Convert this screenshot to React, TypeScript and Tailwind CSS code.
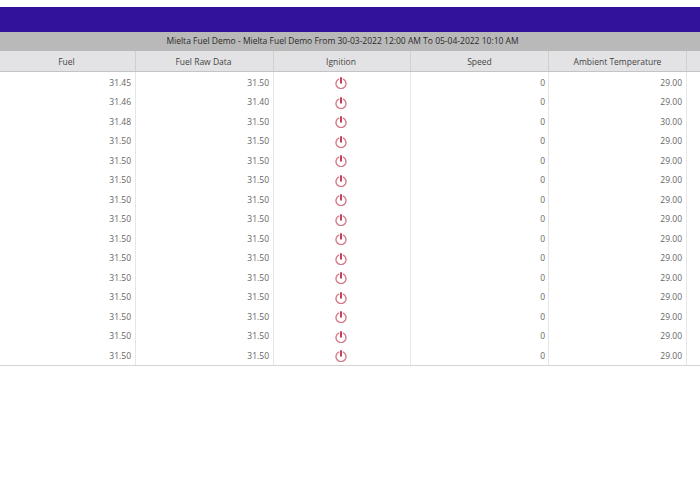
const columns = ["Fuel", "Fuel Raw Data", "Ignition", "Speed", "Ambient Temperature", ""];

const rows = [
  ["31.45", "31.50", "29.00"],
  ["31.46", "31.40", "29.00"],
  ["31.48", "31.50", "30.00"],
  ...Array.from({ length: 12 }, () => ["31.50", "31.50", "29.00"]),
];

const gridCols = "grid grid-cols-[136px_138px_137px_138px_138px_13px]";

function PowerIcon() {
  return (
    <svg width="12" height="13" viewBox="0 0 12 13" fill="none" stroke="#d57a8a" strokeWidth="1.4" strokeLinecap="round">
      <path d="M3.6 3.2a5 5 0 1 0 4.8 0" />
      <path d="M6 2v4.8" stroke="#c4415c" strokeWidth="2" />
    </svg>
  );
}

export default function App() {
  return (
    <div className="h-[500px] w-[700px] overflow-hidden bg-white pt-[7px] font-['Open_Sans',sans-serif] text-[8.5px] text-[#666]">
      <div className="h-[25px] bg-[#32129a]"></div>
      <div className="flex h-[19px] items-center justify-center bg-[#b9b9b9] pr-[15px] text-[#2a2a2a]">
        Mielta Fuel Demo - Mielta Fuel Demo From 30-03-2022 12:00 AM To 05-04-2022 10:10 AM
      </div>

      {/* header row */}
      <div className={`${gridCols} h-[21px] border-b border-[#c4c4c4] bg-[#e3e3e5] text-[#444]`}>
        {columns.map((name, i) => (
          <div
            key={i}
            className={`flex items-center justify-center border-r border-[#cfcfcf] pt-[2px] last:border-r-0 ${i < 3 ? "pr-[2px]" : ""}`}
          >
            {name}
          </div>
        ))}
      </div>

      {/* data rows */}
      <div className="border-b border-[#d4d4d4]">
        {rows.map((row, i) => (
          <div key={i} className={`${gridCols} h-[19.5px]`}>
            <div className="flex items-center justify-end border-r border-[#e6e6e6] pr-[4px] pt-[3px]">{row[0]}</div>
            <div className="flex items-center justify-end border-r border-[#e6e6e6] pr-[4px] pt-[3px]">{row[1]}</div>
            <div className="flex items-center justify-center border-r border-[#e6e6e6] pr-[2px] pt-[2px]">
              <PowerIcon />
            </div>
            <div className="flex items-center justify-end border-r border-[#e6e6e6] pr-[3px] pt-[3px]">0</div>
            <div className="flex items-center justify-end border-r border-[#e6e6e6] pr-[4px] pt-[3px]">{row[2]}</div>
            <div></div>
          </div>
        ))}
      </div>
    </div>
  );
}
